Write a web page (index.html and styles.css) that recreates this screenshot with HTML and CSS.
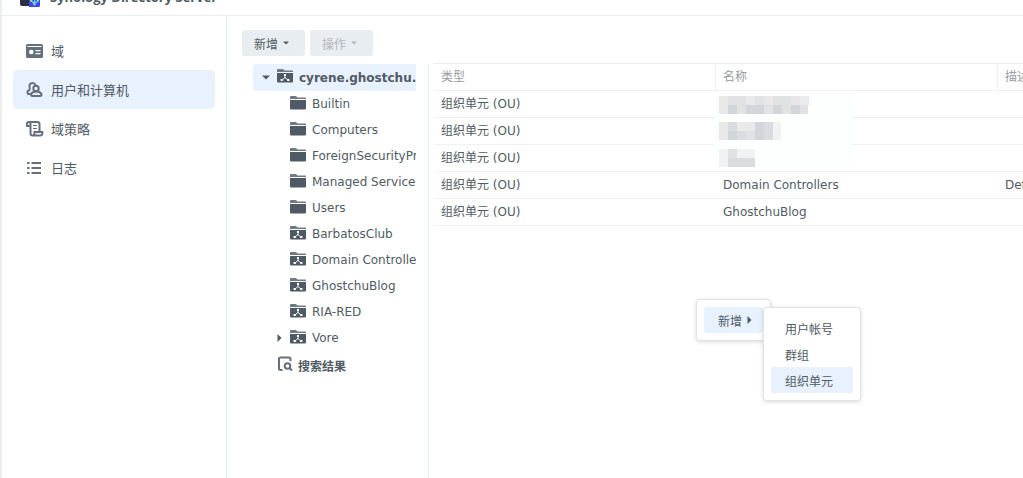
FILE: index.html
```
<!DOCTYPE html>
<html lang="zh-CN">

<head>
  <meta charset="UTF-8">
  <meta name="viewport" content="width=device-width, initial-scale=1.0">
  <title>Synology Directory Server</title>
  <link rel="stylesheet" href="styles.css">
</head>

<body>
  <svg class="defs" aria-hidden="true">
    <symbol id="folder" viewBox="0 0 16 14">
      <path d="M0 0.8Q0 0 .8 0H6L7.5 1.4H15.2Q16 1.4 16 2.2V3H0Z" fill="#707a84" />
      <path d="M0 4H16V12.4Q16 13.4 15 13.4H1Q0 13.4 0 12.4Z" />
    </symbol>
    <symbol id="ou" viewBox="0 0 16 14">
      <path d="M0 0.8Q0 0 .8 0H6L7.5 1.4H15.2Q16 1.4 16 2.2V3H0Z" fill="#707a84" />
      <path d="M0 4H16V12.4Q16 13.4 15 13.4H1Q0 13.4 0 12.4Z" />
      <path d="M8 6V9M8 8.5L5 11M8 8.5L11 11" stroke="#fff" stroke-width="0.9" fill="none" />
      <path d="M7 5H9V7H7ZM3.6 10H5.8V12H3.6ZM10.2 10H12.4V12H10.2Z" fill="#fff" />
    </symbol>
    <symbol id="down" viewBox="0 0 8 5">
      <path d="M0 0.5H8L4 4.5Z" />
    </symbol>
    <symbol id="right" viewBox="0 0 5 8">
      <path d="M0.5 0L4.5 4L0.5 8Z" />
    </symbol>
  </svg>

  <header id="header">
    <svg class="logo" viewBox="0 0 20 20">
      <rect width="16" height="19" rx="2" fill="#2b3040" />
      <path d="M9 4H20V18.5Q20 20 18.5 20H9Z" fill="#3b45f0" />
      <path d="M14.500 12V18M11 13.500L14.500 17L18 13.500" stroke="#72c6c8" stroke-width="1.500" fill="none" />
      <path d="M10 12.500H12V14.500H10ZM17 12.500H19V14.500H17ZM13.500 16.500H15.500V18.500H13.500Z" fill="#8bdcb0" />
    </svg>
    <h1>Synology Directory Server</h1>
  </header>

  <div id="container">
    <nav id="sidebar">
      <a href="#domain">
        <svg class="icon" viewBox="0 0 18 18">
          <path fill-rule="evenodd" d="M1.500 2H15.500Q17 2 17 3.500V14.500Q17 16 15.500 16H1.500Q0 16 0 14.500V3.500Q0 2 1.500 2ZM1.500 4V5H15.500V4ZM5.300 7.700A2.300 2.300 0 1 0 5.300 12.300A2.300 2.300 0 1 0 5.300 7.700ZM9.500 8V9.300H14.500V8ZM9.500 11V12.300H14.500V11Z" />
        </svg>
        域
      </a>
      <a href="#users" class="active">
        <svg class="icon line" viewBox="0 0 18 18">
          <path d="M4.300 8.500C2.500 5.500 3.500 2 6.500 2C8 2 9 2.700 9.500 4M4.300 8.500Q1.500 9.300 1.500 11.500V12Q1.500 13 2.500 13H4.500" />
          <circle cx="10" cy="7.500" r="2.700" />
          <path d="M7.500 11Q5 12 5 14Q5 15 6.500 15H14Q15.500 15 15.500 14Q15.500 12 13 11Q10.200 10 7.500 11Z" />
        </svg>
        用户和计算机
      </a>
      <a href="#policy">
        <svg class="icon line" viewBox="0 0 18 18">
          <path d="M3.500 6H1V4Q1 2 2.800 2H11.500Q13.500 2 13.500 4V11.500M2.800 2Q4.500 2 4.500 4V13.500Q4.500 15.500 6.500 15.500H14Q16.300 15.500 16.300 13.500V12H8.500V13.500Q8.500 15.500 6.500 15.500" />
          <path d="M7 5.500H11M7 8.500H11" stroke-width="1.200" />
        </svg>
        域策略
      </a>
      <a href="#log">
        <svg class="icon line" viewBox="0 0 18 18">
          <path d="M1 4H3.500M1 9H3.500M1 14H3.500M5.500 4H15M5.500 9H15M5.500 14H15" />
        </svg>
        日志
      </a>
    </nav>

    <main id="main">
      <div class="toolbar">
        <button type="button">新增<svg class="down"><use href="#down" /></svg></button>
        <button type="button" disabled>操作<svg class="down"><use href="#down" /></svg></button>
      </div>

      <div class="content">
        <div class="tree">
          <ul>
            <li class="root"><svg class="down"><use href="#down" /></svg><svg class="folder"><use href="#ou" /></svg>cyrene.ghostchu.com</li>
            <li class="child"><svg class="folder"><use href="#folder" /></svg>Builtin</li>
            <li class="child"><svg class="folder"><use href="#folder" /></svg>Computers</li>
            <li class="child"><svg class="folder"><use href="#folder" /></svg>ForeignSecurityPrincipals</li>
            <li class="child"><svg class="folder"><use href="#folder" /></svg>Managed Service Accounts</li>
            <li class="child"><svg class="folder"><use href="#folder" /></svg>Users</li>
            <li class="child"><svg class="folder"><use href="#ou" /></svg>BarbatosClub</li>
            <li class="child"><svg class="folder"><use href="#ou" /></svg>Domain Controllers</li>
            <li class="child"><svg class="folder"><use href="#ou" /></svg>GhostchuBlog</li>
            <li class="child"><svg class="folder"><use href="#ou" /></svg>RIA-RED</li>
            <li class="closed"><svg class="right"><use href="#right" /></svg><svg class="folder"><use href="#ou" /></svg>Vore</li>
            <li class="search">
              <svg class="result" viewBox="0 0 16 16">
                <path d="M5.500 14H3.500Q2 14 2 12.500V3Q2 1.500 3.500 1.500H12Q13.500 1.500 13.500 3V5" />
                <circle cx="10.500" cy="10" r="2.800" />
                <path d="M12.500 12L15 14.500" />
              </svg>搜索结果
            </li>
          </ul>
        </div>

        <div class="grid">
          <table>
            <thead>
              <tr>
                <th class="type">类型</th>
                <th class="name">名称</th>
                <th>描述</th>
              </tr>
            </thead>
            <tbody>
              <tr>
                <td>组织单元 (OU)</td>
                <td class="masked">
                  <svg class="mosaic" viewBox="0 0 137 73" aria-hidden="true">
                    <path fill="#fdfefe" d="M0 0H137V73H0Z" />
                    <path fill="#e9e9ea" d="M4 1h9v9h-9zM31 1h9v9h-9zM49 1h9v9h-9zM85 1h9v9h-9zM4 10h9v9h-9zM4 27h9v18h-9zM22 27h9v9h-9zM31 27h9v9h-9z" />
                    <path fill="#e0e2e4" d="M13 1h9v9h-9zM22 1h9v9h-9zM40 1h9v9h-9zM58 1h27v9h-27zM22 10h9v9h-9zM49 10h9v9h-9zM67 10h9v9h-9zM85 10h8v9h-8zM31 36h9v9h-9zM13 54h9v9h-9z" />
                    <path fill="#e8edf2" d="M85 1h8v9h-8z" />
                    <path fill="#e9e7e6" d="M76 1h9v9h-9z" />
                    <path fill="#d2d5d9" d="M13 10h9v9h-9zM31 10h18v9h-18zM58 10h9v9h-9zM76 10h9v9h-9zM13 36h9v9h-9zM40 27h9v18h-9z" />
                    <path fill="#dadce0" d="M13 27h9v9h-9zM49 27h9v18h-9zM22 36h9v9h-9zM13 63h18v9h-18zM31 63h9v9h-9z" />
                    <path fill="#f1f2f4" d="M58 27h8v18h-8zM4 54h9v18h-9zM22 54h18v9h-18z" />
                  </svg>
                </td>
                <td></td>
              </tr>
              <tr>
                <td>组织单元 (OU)</td>
                <td></td>
                <td></td>
              </tr>
              <tr>
                <td>组织单元 (OU)</td>
                <td></td>
                <td></td>
              </tr>
              <tr>
                <td>组织单元 (OU)</td>
                <td>Domain Controllers</td>
                <td>Default container for domain controllers</td>
              </tr>
              <tr>
                <td>组织单元 (OU)</td>
                <td>GhostchuBlog</td>
                <td></td>
              </tr>
            </tbody>
          </table>
        </div>
      </div>
    </main>
  </div>

  <div class="menu" id="menu">
    <button type="button" class="active">新增<svg class="right"><use href="#right" /></svg></button>
  </div>
  <div class="menu" id="submenu">
    <button type="button">用户帐号</button>
    <button type="button">群组</button>
    <button type="button" class="active">组织单元</button>
  </div>
</body>

</html>
```
FILE: styles.css
```
* {
  margin: 0;
  padding: 0;
  box-sizing: border-box;
}

body {
  display: flex;
  flex-direction: column;
  height: 100vh;
  overflow: hidden;
  border-left: 2px solid #ebedef;
  background-color: #fff;
  color: #505a64;
  font-family: "DejaVu Sans", "Noto Sans CJK SC", sans-serif;
  font-size: 12px;
}

svg {
  flex: none;
  fill: #505a64;
}

.defs {
  position: absolute;
  width: 0;
  height: 0;
}

.down {
  width: 8px;
  height: 5px;
}

.right {
  width: 5px;
  height: 8px;
}

#header {
  display: flex;
  align-items: flex-end;
  flex: none;
  height: 16px;
  padding: 0 18px 8px;
  border-bottom: 1px solid #e9eef1;
}

#header .logo {
  width: 20px;
  height: 20px;
}

#header h1 {
  margin-left: 10px;
  font-family: "Open Sans", sans-serif;
  font-size: 13px;
  line-height: 20px;
}

#container {
  display: flex;
  flex: 1;
  min-height: 0;
}

#sidebar {
  flex: none;
  width: 225px;
  padding: 15px 11px;
  border-right: 1px solid #e4eaf1;
}

#sidebar a {
  display: flex;
  align-items: center;
  height: 39px;
  padding-left: 13px;
  border-radius: 5px;
  color: #505a64;
  font-size: 13px;
  text-decoration: none;
}

#sidebar a.active {
  background-color: #e8f1fe;
}

.icon {
  width: 18px;
  height: 18px;
  margin-right: 7px;
  fill: #66707c;
}

.line {
  fill: none;
  stroke: #66707c;
  stroke-width: 2;
}

#main {
  display: flex;
  flex: 1;
  flex-direction: column;
  min-width: 0;
  padding: 14px 0 0 15px;
}

.toolbar {
  display: flex;
  gap: 5px;
}

.toolbar button {
  display: flex;
  align-items: center;
  gap: 5px;
  width: 63px;
  height: 26px;
  padding-left: 12px;
  border: none;
  border-radius: 3px;
  background-color: #e8edf1;
  color: #505a64;
  font: inherit;
}

.toolbar .down {
  width: 6px;
  height: 4px;
}

.toolbar button:disabled {
  color: #b1b7bd;
}

.toolbar button:disabled .down {
  fill: #b1b7bd;
}

.content {
  display: flex;
  flex: 1;
  min-height: 0;
  padding-top: 7px;
}

.tree {
  flex: none;
  width: 187px;
  margin-top: 1px;
  padding: 0 12px 0 11px;
  border-right: 1px solid #e4eaf1;
}

.tree ul {
  list-style: none;
}

.tree li {
  display: flex;
  align-items: center;
  height: 26px;
  overflow: hidden;
  white-space: nowrap;
}

.folder {
  width: 16px;
  height: 14px;
  margin-right: 6px;
  margin-bottom: 3px;
}

.tree .root {
  height: 27px;
  padding-left: 9px;
  border-radius: 4px 0 0 4px;
  background-color: #e8f1fe;
  font-weight: bold;
}

.root .down {
  margin-right: 7px;
}

.tree .child {
  padding-left: 37px;
}

.tree .closed {
  padding-left: 24px;
}

.closed .right {
  margin-right: 8px;
}

.tree .search {
  height: 28px;
  padding-left: 24px;
  font-weight: bold;
}

.result {
  width: 16px;
  height: 16px;
  margin-right: 5px;
  margin-bottom: 2px;
  fill: none;
  stroke: #66707c;
  stroke-width: 2;
}

.grid {
  flex: 1;
  min-width: 0;
  margin-left: 5px;
  overflow: hidden;
}

table {
  width: 100%;
  border-collapse: separate;
  border-spacing: 0;
  border-top: 1px solid #e9eff4;
  table-layout: fixed;
}

th,
td {
  height: 27px;
  padding: 0 7px;
  overflow: hidden;
  border-bottom: 1px solid #eff2f4;
  line-height: 16px;
  text-align: left;
  white-space: nowrap;
}

th:last-child,
td:last-child {
  padding-right: 0;
  border-right: none;
}

th {
  border-right: 1px solid #e9eff4;
  color: #969ca2;
  font-weight: normal;
}

.type,
.name {
  width: 282px;
}

.masked {
  position: relative;
  overflow: visible;
}

.mosaic {
  position: absolute;
  top: 4px;
  left: -1px;
  width: 137px;
  height: 73px;
}

.menu {
  position: absolute;
  padding: 7px;
  border: 1px solid #dfe4e9;
  border-radius: 4px;
  background-color: #fff;
  box-shadow: 0 1px 4px rgba(0, 0, 0, .15);
}

.menu button {
  display: flex;
  align-items: center;
  gap: 5px;
  width: 100%;
  height: 26px;
  padding-left: 14px;
  border: none;
  border-radius: 3px;
  background-color: #fff;
  color: #505a64;
  font: inherit;
}

.menu button.active {
  background-color: #e8f1fe;
}

#menu {
  top: 299px;
  left: 696px;
  width: 75px;
}

#submenu {
  top: 307px;
  left: 763px;
  width: 98px;
}
```
